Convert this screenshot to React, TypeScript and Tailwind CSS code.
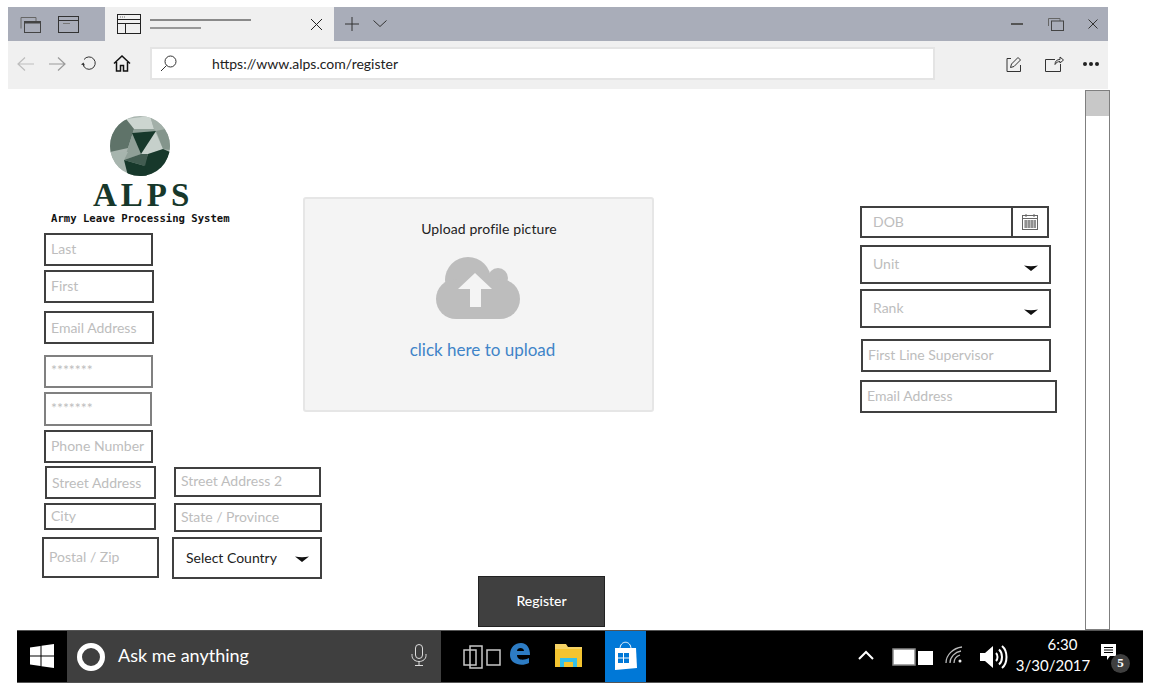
import React from "react";

const font = "font-['Lato','Noto_Sans',sans-serif]";

function Field({ label, className, dark, textClass }: { label: string; className: string; dark?: boolean; textClass?: string }) {
  return (
    <div className={`flex items-center border-2 border-[#404040] bg-white px-[5px] text-[14px] leading-none ${dark ? "text-[#222]" : "text-[#bdbdbd]"} ${className}`}>
      <span className={`whitespace-nowrap ${textClass ?? "-mt-[2px]"}`}>{label}</span>
    </div>
  );
}

function Caret({ className = "" }: { className?: string }) {
  return (
    <svg width="14" height="6" viewBox="0 0 14 6" className={className}>
      <path d="M0 0.500Q7 2 14 0.500L7 6Z" fill="#111" />
    </svg>
  );
}

function Logo() {
  const polys: [string, string][] = [
    ["16,3 40,0 44,13 24,13", "#ccd5d0"],
    ["40,0 60,12 46,15 44,13", "#a3b0a9"],
    ["0,12 16,3 24,13 18,32 0,36", "#5f7369"],
    ["24,13 44,13 46,15 22,17 31,38 14,44 18,32", "#8f9f97"],
    ["45,15 31,38 38,38 53,33", "#c6d0cb"],
    ["46,15 60,12 60,34 53,33", "#84958c"],
    ["22,17 46,15 31,38", "#17382b"],
    ["38,38 53,33 60,36 50,60 30,60", "#17382b"],
    ["14,44 31,38 38,38 35,50", "#425c51"],
    ["14,44 35,50 38,60 18,60", "#17382b"],
    ["0,36 18,36 14,44 12,60 0,50", "#a7b5ae"],
  ];
  return (
    <svg width="60" height="60" viewBox="0 0 60 60">
      <defs>
        <clipPath id="logo-clip">
          <circle cx="30" cy="30" r="30" />
        </clipPath>
      </defs>
      <g clipPath="url(#logo-clip)">
        <rect width="60" height="60" fill="#a9b5af" />
        {polys.map(([p, c], i) => (
          <polygon key={i} points={p} fill={c} />
        ))}
      </g>
    </svg>
  );
}

function TabStrip() {
  return (
    <div className="flex h-[34px] w-[1100px] items-center bg-[#a9adb9]">
      <svg width="21" height="17" viewBox="0 0 21 17" className="ml-[12px]" fill="none" stroke="#444">
        <path d="M1 12.500V1.500H16V5" stroke="#666" />
        <rect x="4.500" y="5.500" width="16" height="11" />
        <path d="M4.500 6.500H20.500" strokeWidth="2" />
      </svg>
      <svg width="21" height="17" viewBox="0 0 21 17" className="ml-[17px]" fill="none" stroke="#333">
        <rect x="0.500" y="0.500" width="20" height="16" />
        <path d="M0.500 4.500H20.500" />
        <path d="M5 7.500H12" stroke="#777" />
      </svg>
      <div className="ml-[26px] flex h-full w-[229px] items-center bg-[#f0f0f0]">
        <svg width="24" height="20" viewBox="0 0 24 20" className="ml-[12px]" fill="none" stroke="#222">
          <rect x="0.500" y="0.500" width="23" height="19" />
          <path d="M0.500 5.500H23.500M0.500 9.500H23.500M8.500 9.500V19.500" />
          <path d="M3 3H8" stroke="#777" strokeDasharray="1 1" />
        </svg>
        <div className="ml-[9px] flex w-[101px] flex-col gap-[6px]">
          <div className="h-[2px] w-[101px] bg-[#8a8a8a]" />
          <div className="h-[2px] w-[51px] bg-[#9a9a9a]" />
        </div>
        <svg width="13" height="13" viewBox="0 0 13 13" className="ml-[59px]" stroke="#222" fill="none">
          <path d="M1 1L12 12M12 1L1 12" />
        </svg>
      </div>
      <svg width="14" height="14" viewBox="0 0 14 14" className="ml-[11px]" stroke="#333" fill="none">
        <path d="M7 0V14M0 7H14" />
      </svg>
      <svg width="14" height="8" viewBox="0 0 14 8" className="ml-[14px]" stroke="#333" fill="none">
        <path d="M0.500 0.500L7 6.500L13.500 0.500" />
      </svg>
      <div className="ml-[624px] h-[2px] w-[12px] bg-[#555]" />
      <svg width="16" height="13" viewBox="0 0 16 13" className="ml-[25px]" fill="none" stroke="#444">
        <path d="M0.500 8V0.500H12V3" stroke="#666" />
        <rect x="3.500" y="3" width="12" height="9.500" />
      </svg>
      <svg width="10" height="10" viewBox="0 0 10 10" className="ml-[24px]" stroke="#333" fill="none">
        <path d="M0.500 0.500L9.500 9.500M9.500 0.500L0.500 9.500" />
      </svg>
    </div>
  );
}

function Toolbar() {
  return (
    <div className="flex h-[48px] w-[1100px] items-center bg-[#f0f0f0] pb-[3px]">
      <svg width="17" height="14" viewBox="0 0 17 14" className="ml-[9px]" fill="none" stroke="#bdbdbd" strokeWidth="1.200">
        <path d="M17 7H1M8 0.500L1 7L8 13.500" />
      </svg>
      <svg width="17" height="14" viewBox="0 0 17 14" className="ml-[15px]" fill="none" stroke="#9a9a9a" strokeWidth="1.200">
        <path d="M0 7H16M9 0.500L16 7L9 13.500" />
      </svg>
      <svg width="16" height="15" viewBox="0 0 16 15" className="ml-[15px]" fill="none" stroke="#333">
        <path d="M3 3.500A6.200 6.200 0 1 1 2 8.500" />
        <path d="M0 8.500L2.500 6.500L4 9.500" fill="#333" stroke="none" />
      </svg>
      <svg width="18" height="17" viewBox="0 0 18 17" className="ml-[16px]" fill="none" stroke="#111" strokeWidth="1.500">
        <path d="M1 8.500L9 1L17 8.500M3.500 7V16H7.500V10.500H10.500V16H14.500V7" />
      </svg>
      <div className="ml-[19px] flex h-[33px] w-[785px] items-center border-2 border-[#e4e4e4] bg-white">
        <svg width="17" height="17" viewBox="0 0 17 17" className="ml-[8px]" fill="none" stroke="#333">
          <circle cx="10.500" cy="6.500" r="5.500" />
          <path d="M6.500 10.500L1 16" />
        </svg>
        <span className={`ml-[35px] text-[14px] text-[#222] ${font}`}>https://www.alps.com/register</span>
      </div>
      <svg width="16" height="16" viewBox="0 0 16 16" className="ml-[71px]" fill="none" stroke="#333">
        <path d="M5 2.500H1V15.500H14.500V9" />
        <path d="M4.500 11.500L5.500 8L12 1.500L14.500 4L8 10.500Z" />
      </svg>
      <svg width="19" height="17" viewBox="0 0 19 17" className="ml-[23px]" fill="none" stroke="#333">
        <path d="M10 4.500H0.500V16.500H15.500V9" />
        <path d="M10 9.500C10 6 12 4.500 15 4.500V2L18.500 5L15 8V6.500C13 6.500 11 7.500 10 9.500Z" fill="#f0f0f0" />
      </svg>
      <div className="ml-[19px] flex gap-[2px]">
        <div className="h-[4px] w-[4px] rounded-full bg-[#222]" />
        <div className="h-[4px] w-[4px] rounded-full bg-[#222]" />
        <div className="h-[4px] w-[4px] rounded-full bg-[#222]" />
      </div>
    </div>
  );
}

function Taskbar() {
  return (
    <div className={`ml-[17px] flex h-[53px] w-[1126px] items-stretch border-y border-[#555] bg-black ${font}`}>
      <div className="flex w-[50px] shrink-0 items-center justify-center">
        <svg width="24" height="24" viewBox="0 0 24 24" fill="#fff" className="-mt-[2px]">
          <path d="M0 3.500L10.500 2V11.500H0ZM11.500 1.800L24 0V11.500H11.500ZM0 12.500H10.500V22L0 20.500ZM11.500 12.500H24V24L11.500 22.200Z" />
        </svg>
      </div>
      <div className="flex w-[374px] shrink-0 items-center bg-[#3f3f3f]">
        <div className="ml-[10px] h-[28px] w-[28px] rounded-full border-[5px] border-white" />
        <span className="-mt-[3px] ml-[13px] whitespace-nowrap text-[18px] text-white">Ask me anything</span>
        <svg width="16" height="22" viewBox="0 0 16 22" className="ml-auto mr-[14px] -mt-[4px]" fill="none" stroke="#ddd">
          <rect x="4.500" y="0.500" width="7" height="14" rx="3.500" />
          <path d="M1 10V11.500C1 15 4 17.500 8 17.500C12 17.500 15 15 15 11.500V10M8 17.500V21M4 21.500H12" />
        </svg>
      </div>
      <div className="flex items-center">
        <svg width="38" height="24" viewBox="0 0 38 24" className="ml-[22px] shrink-0" fill="none" stroke="#c8c8c8" strokeWidth="1.500">
          <rect x="1" y="5" width="12" height="15" />
          <rect x="7" y="1" width="12" height="22" />
          <rect x="24" y="5" width="13" height="15" />
        </svg>
        <svg width="22" height="24" viewBox="0 0 22 24" className="ml-[8px] -mt-[6px] shrink-0">
          <path d="M1 13C1 5 6 1 12 1C18 1 21 6 21 13H8C8 18 14 19 20 16V21C12 25 1 22 1 13ZM8 9H15C15 5 8 5 8 9Z" fill="#2d7cc4" />
        </svg>
        <svg width="28" height="25" viewBox="0 0 28 25" className="ml-[24px] -mt-[2px] shrink-0">
          <path d="M0 1H11L13 4H27V24H0Z" fill="#f6d365" />
          <rect x="0" y="6" width="27" height="18" fill="#f4c430" />
          <path d="M5 24V15H22V24H18V19H9V24Z" fill="#35c0e8" />
        </svg>
        <div className="ml-[22px] flex h-[51px] w-[41px] shrink-0 items-center justify-center bg-[#0078d7]">
          <svg width="23" height="29" viewBox="0 0 23 29" className="-mt-[2px]">
            <path d="M6 8C6 -1 17 -1 17 8" fill="none" stroke="#fff" strokeWidth="1" />
            <path d="M1 7H22L23 27L1 29Z" fill="#fff" />
            <path d="M4 12H9V16.500H4ZM10 12H15V16.500H10ZM4 17.500H9V22H4ZM10 17.500H15V22H10Z" fill="#0078d7" />
          </svg>
        </div>
        <svg width="16" height="10" viewBox="0 0 16 10" className="ml-[212px] -mt-[3px] shrink-0" fill="none" stroke="#fff" strokeWidth="2">
          <path d="M1 9L8 2L15 9" />
        </svg>
        <svg width="42" height="18" viewBox="0 0 42 18" className="ml-[18px] shrink-0">
          <rect x="1" y="1" width="22" height="16" fill="#fff" stroke="#888" strokeWidth="1.500" />
          <rect x="26" y="3" width="15" height="14" fill="#fff" />
        </svg>
        <svg width="18" height="18" viewBox="0 0 18 18" className="ml-[11px] -mt-[3px] shrink-0" fill="none" stroke="#bbb" strokeWidth="1.300">
          <path d="M1 17C1 9 8 2 17 1M5 17C5 11 10 6 16 5M9 17C9 13 12 10 15 9" />
          <circle cx="15" cy="15" r="1.500" fill="#eee" stroke="none" />
        </svg>
        <svg width="29" height="26" viewBox="0 0 29 26" className="ml-[17px] shrink-0" fill="none">
          <path d="M0 9H5L13 2V24L5 17H0Z" fill="#fff" />
          <path d="M16 9C18 11 18 15 16 17M19 5.500C23 9 23 17 19 20.500M22 2C28 7 28 19 22 24" stroke="#fff" strokeWidth="2" />
        </svg>
        <div className="ml-[1px] -mt-[3px] flex w-[86px] shrink-0 flex-col items-center text-[15px] leading-[21px] text-white">
          <span className="ml-[19px]">6:30</span>
          <span>3/30/2017</span>
        </div>
        <div className="relative ml-[5px] h-[30px] w-[30px] shrink-0">
          <svg width="16" height="18" viewBox="0 0 16 18" className="mt-[2px]">
            <path d="M0 0H15V12H9L6 16V12H0Z" fill="#fff" />
            <path d="M3 3.500H12M3 6H12M3 8.500H12" stroke="#000" strokeWidth="1" />
          </svg>
          <div className="absolute left-[10px] top-[12px] flex h-[19px] w-[19px] items-center justify-center rounded-full bg-[#3f3f3f] font-['Liberation_Serif',serif] text-[13px] font-bold text-white">5</div>
        </div>
      </div>
    </div>
  );
}

export default function App() {
  return (
    <div className="h-[689px] w-[1150px] overflow-hidden bg-white pt-[7px]">
      <div className="ml-[8px]">
        <TabStrip />
        <Toolbar />
      </div>
      <div className={`ml-[8px] mt-[1px] flex h-[540px] ${font}`}>
        <div className="w-[1077px]">
          <div className="flex h-[376px]">
            <div className="w-[295px]">
              <div className="h-[143px]">
                <div className="ml-[102px] pt-[26px]">
                  <Logo />
                </div>
                <div className="ml-[85px] mt-[6px] font-['Liberation_Serif',serif] text-[33px] font-bold leading-[26px] tracking-[4px] text-[#17382b]">ALPS</div>
                <div className="ml-[43px] mt-[4px] whitespace-nowrap font-['DejaVu_Sans_Mono',monospace] text-[10.600px] font-bold leading-[12px] text-[#111]">Army Leave Processing System</div>
              </div>
              <Field label="Last" className="ml-[36px] h-[33px] w-[109px]" />
              <Field label="First" className="ml-[36px] mt-[4px] h-[33px] w-[110px]" />
              <Field label="Email Address" textClass="mt-0" className="ml-[36px] mt-[8px] h-[33px] w-[110px]" />
              <Field label="*******" textClass="-mt-[4px]" className="ml-[36px] mt-[11px] h-[33px] w-[109px] border-[#808080]" />
              <Field label="*******" textClass="-mt-[3px]" className="ml-[36px] mt-[4px] h-[34px] w-[108px] border-[#808080]" />
              <Field label="Phone Number" className="ml-[36px] mt-[4px] h-[33px] w-[109px]" />
            </div>
            <div className="mt-[107px] flex h-[215px] w-[351px] flex-col items-center rounded-[3px] border-2 border-[#e6e6e6] bg-[#f4f4f4]">
              <span className="ml-[21px] mt-[20px] text-[14px] leading-[20px] tracking-[0.100px] text-[#222]">Upload profile picture</span>
              <svg width="85" height="63" viewBox="0 0 85 63" className="mt-[18px]">
                <g fill="#bdbdbd">
                  <circle cx="32" cy="23" r="23" />
                  <circle cx="62" cy="21" r="10" />
                  <circle cx="20" cy="42" r="20" />
                  <circle cx="64" cy="42" r="20" />
                  <rect x="20" y="26" width="44" height="36" />
                </g>
                <path d="M39 16L56 32H45V50H34V32H22Z" fill="#f4f4f4" />
              </svg>
              <span className="ml-[8px] mt-[18px] text-[17px] leading-[24px] text-[#3f84c8]">click here to upload</span>
            </div>
            <div className="ml-[206px] mt-[116px] flex flex-col">
              <div className="flex h-[32px] w-[189px] border-2 border-[#404040] text-[14px] text-[#bdbdbd]">
                <span className="-mt-[2px] flex flex-1 items-center pl-[11px]">DOB</span>
                <div className="flex w-[36px] items-center justify-center border-l-2 border-[#404040]">
                  <svg width="16" height="16" viewBox="0 0 16 16" fill="none" stroke="#666">
                    <rect x="0.500" y="1.500" width="15" height="14" />
                    <path d="M0.500 4.500H15.500" />
                    <path d="M2 7H14M2 9H14M2 11H14M2 13H14M4 6V14M7 6V14M10 6V14M13 6V14" stroke="#444" strokeWidth="0.700" />
                    <path d="M4 0V3M12 0V3" />
                  </svg>
                </div>
              </div>
              <div className="mt-[7px] flex h-[39px] w-[191px] items-center justify-between border-2 border-[#404040] pl-[11px] pr-[11px] text-[14px] text-[#bdbdbd]">
                <span className="-mt-[3px]">Unit</span>
                <Caret className="mt-[6px]" />
              </div>
              <div className="mt-[5px] flex h-[39px] w-[191px] items-center justify-between border-2 border-[#404040] pl-[11px] pr-[11px] text-[14px] text-[#bdbdbd]">
                <span className="-mt-[3px]">Rank</span>
                <Caret className="mt-[6px]" />
              </div>
              <Field label="First Line Supervisor" className="ml-[1px] mt-[11px] h-[33px] w-[190px]" />
              <Field label="Email Address" className="mt-[8px] h-[33px] w-[197px]" />
            </div>
          </div>
          <div className="ml-[34px] flex h-[113px]">
            <div className="flex w-[117px] flex-col">
              <Field label="Street Address" textClass="mt-0" className="ml-[3px] h-[33px] w-[111px]" />
              <Field label="City" className="ml-[2px] mt-[4px] h-[27px] w-[112px]" />
              <Field label="Postal / Zip" className="mt-[7px] h-[41px] w-[117px]" />
            </div>
            <div className="ml-[13px] flex w-[150px] flex-col">
              <Field label="Street Address 2" className="ml-[2px] mt-[1px] h-[30px] w-[147px]" />
              <Field label="State / Province" className="ml-[2px] mt-[6px] h-[29px] w-[148px]" />
              <div className="mt-[5px] flex h-[42px] w-[150px] items-center justify-between border-2 border-[#404040] pl-[12px] pr-[11px] text-[14px] text-[#222]">
                <span className="-mt-[2px]">Select Country</span>
                <Caret className="mt-[2px]" />
              </div>
            </div>
          </div>
          <div className="-mt-[3px] ml-[470px] flex h-[51px] w-[127px] items-center justify-center border border-[#222] bg-[#404040] pb-[2px] text-[14px] font-medium text-white">Register</div>
        </div>
        <div className="h-[540px] w-[25px] border border-[#7f7f7f] bg-white">
          <div className="h-[25px] w-full bg-[#c8c8c8]" />
        </div>
      </div>
      <Taskbar />
    </div>
  );
}
